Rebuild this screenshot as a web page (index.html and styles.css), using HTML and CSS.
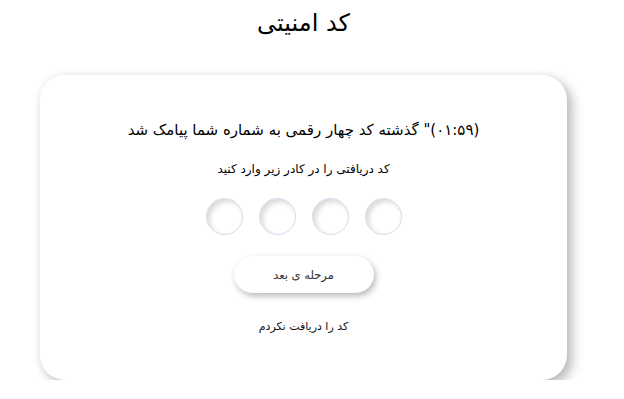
FILE: index.html
```html
<!DOCTYPE html>
<html lang="fa" dir="rtl">

<head>
    <meta charset="UTF-8">
    <title>کد امنیتی</title>
    <link rel="stylesheet" href="styles.css">
</head>

<body>
    <div class="page">
        <h1 class="title">کد امنیتی</h1>

        <div class="card">
            <p class="sent">(۰۱:۵۹)" گذشته کد چهار رقمی به شماره شما پیامک شد</p>
            <p class="hint">کد دریافتی را در کادر زیر وارد کنید</p>

            <div class="digits">
                <input type="text" maxlength="1" class="digit">
                <input type="text" maxlength="1" class="digit">
                <input type="text" maxlength="1" class="digit">
                <input type="text" maxlength="1" class="digit">
            </div>

            <button type="button" class="next">مرحله ی بعد</button>

            <a href="#" class="resend">کد را دریافت نکردم</a>
        </div>
    </div>
</body>

</html>
```

FILE: styles.css
```css
/* 기본 */
* {
    box-sizing: border-box;
    margin: 0;
    padding: 0;
}

html,
body {
    background: #ffffff;
    color: #000000;
    font-family: "DejaVu Sans", "Noto Sans", sans-serif;
}

.page {
    display: flex;
    flex-direction: column;
    align-items: center;
    padding-left: 40px;
    padding-right: 57px;
}

.title {
    font-size: 24px;
    font-weight: 400;
    line-height: 30px;
    margin-top: 8px;
}

/* 카드 */
.card {
    width: 100%;
    height: 305px;
    margin-top: 37px;
    background: #ffffff;
    border-radius: 25px;
    box-shadow: 5px 5px 12px rgba(0, 0, 0, 0.28), -1px -1px 8px rgba(0, 0, 0, 0.04);
    display: flex;
    flex-direction: column;
    align-items: center;
    padding-top: 45px;
}

.sent {
    font-size: 15px;
    line-height: 20px;
}

.hint {
    font-size: 12px;
    line-height: 18px;
    margin-top: 20px;
}

.digits {
    display: flex;
    direction: ltr;
    gap: 16px;
    margin-top: 20px;
}

.digit {
    width: 37px;
    height: 37px;
    border-radius: 50%;
    border: 1px solid #d3dbec;
    background: #ffffff;
    box-shadow: inset 3px 3px 5px rgba(0, 0, 0, 0.15);
    text-align: center;
    font-size: 16px;
    outline: none;
}

.next {
    width: 140px;
    height: 37px;
    margin-top: 21px;
    border: none;
    border-radius: 20px;
    background: #ffffff;
    box-shadow: 2px 3px 6px rgba(0, 0, 0, 0.28);
    font-family: inherit;
    font-size: 11.5px;
    color: #333333;
    cursor: pointer;
}

.resend {
    margin-top: 27px;
    font-size: 11px;
    color: #111111;
    text-decoration: none;
}
```
